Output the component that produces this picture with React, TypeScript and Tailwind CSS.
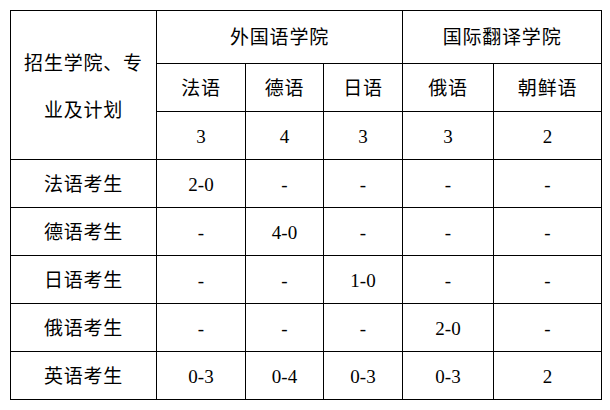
const cell = "border border-black text-center align-middle p-0 pt-[3px]";
const cjk = "tracking-[0.8px]";

const rows: { label: string; values: string[] }[] = [
  { label: "法语考生", values: ["2-0", "-", "-", "-", "-"] },
  { label: "德语考生", values: ["-", "4-0", "-", "-", "-"] },
  { label: "日语考生", values: ["-", "-", "1-0", "-", "-"] },
  { label: "俄语考生", values: ["-", "-", "-", "2-0", "-"] },
  { label: "英语考生", values: ["0-3", "0-4", "0-3", "0-3", "2"] },
];

export default function App() {
  return (
    <div className="w-[610px] h-[410px] bg-white pt-[10px] pl-[10px] text-black font-['Liberation_Serif','Noto_Sans_CJK_SC',serif] text-[19px]">
      <table className="table-fixed border-collapse w-[591px]">
        <colgroup>
          <col className="w-[146px]" />
          <col className="w-[89px]" />
          <col className="w-[78px]" />
          <col className="w-[79px]" />
          <col className="w-[91px]" />
          <col className="w-[108px]" />
        </colgroup>
        <tbody>
          <tr className="h-[53px]">
            <td rowSpan={3} className={`${cell} ${cjk} leading-[47px]`}>
              招生学院、专
              <br />
              业及计划
            </td>
            <td colSpan={3} className={`${cell} ${cjk}`}>
              外国语学院
            </td>
            <td colSpan={2} className={`${cell} ${cjk}`}>
              国际翻译学院
            </td>
          </tr>
          <tr className="h-[48px]">
            {["法语", "德语", "日语", "俄语", "朝鲜语"].map((m) => (
              <td key={m} className={`${cell} ${cjk}`}>
                {m}
              </td>
            ))}
          </tr>
          <tr className="h-[48px]">
            {["3", "4", "3", "3", "2"].map((n, i) => (
              <td key={i} className={cell}>
                {n}
              </td>
            ))}
          </tr>
          {rows.map((r) => (
            <tr key={r.label} className="h-[48px]">
              <td className={`${cell} ${cjk}`}>{r.label}</td>
              {r.values.map((v, i) => (
                <td key={i} className={cell}>
                  {v}
                </td>
              ))}
            </tr>
          ))}
        </tbody>
      </table>
    </div>
  );
}
